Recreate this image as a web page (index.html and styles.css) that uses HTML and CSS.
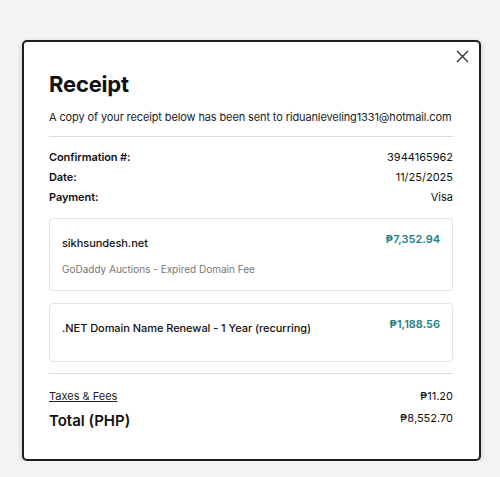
FILE: index.html
```html
<!DOCTYPE html>
<html lang="en">
<head>
<meta charset="utf-8">
<title>Receipt</title>
<link rel="stylesheet" href="styles.css">
</head>
<body>
<div class="modal">
  <button class="close" aria-label="Close">
    <svg width="13" height="13" viewBox="0 0 13 13"><path d="M1 1L12 12M12 1L1 12" stroke="#333" stroke-width="1.4" fill="none"/></svg>
  </button>
  <h1 class="title">Receipt</h1>
  <p class="desc">A copy of your receipt below has been sent to riduanleveling1331@hotmail.com</p>
  <hr class="rule">
  <div class="meta">
    <div class="row"><span class="label">Confirmation #:</span><span>3944165962</span></div>
    <div class="row"><span class="label">Date:</span><span>11/25/2025</span></div>
    <div class="row"><span class="label">Payment:</span><span>Visa</span></div>
  </div>
  <div class="card card-one">
    <div class="card-main">
      <div class="item-name">sikhsundesh.net</div>
      <div class="item-sub">GoDaddy Auctions - Expired Domain Fee</div>
    </div>
    <div class="price">₱7,352.94</div>
  </div>
  <div class="card card-two">
    <div class="card-main">
      <div class="item-name">.NET Domain Name Renewal - 1 Year (recurring)</div>
    </div>
    <div class="price">₱1,188.56</div>
  </div>
  <hr class="rule rule-bottom">
  <div class="row taxes"><span class="link">Taxes &amp; Fees</span><span>₱11.20</span></div>
  <div class="row total"><span class="total-label">Total (PHP)</span><span class="total-value">₱8,552.70</span></div>
</div>
</body>
</html>
```
FILE: styles.css
```css
* { box-sizing: border-box; }
body {
  margin: 0;
  background: #f4f4f4;
  padding: 40px 0 0 22px;
  font-family: Inter, "Noto Sans", sans-serif;
  color: #111;
}
.modal {
  position: relative;
  width: 459px;
  height: 421px;
  background: #fff;
  border: 2px solid #1e1e1e;
  border-radius: 5px;
  box-shadow: 0 2px 6px rgba(0,0,0,0.18);
  padding: 28px 26px 0 25px;
}
.close {
  position: absolute;
  top: 8px;
  right: 10px;
  background: none;
  border: 0;
  padding: 0;
  width: 13px;
  height: 13px;
  display: flex;
}
.title {
  margin: 0;
  font-size: 22px;
  line-height: 28px;
  font-weight: 700;
  letter-spacing: -0.2px;
}
.desc {
  margin: 11px 0 0;
  font-size: 11px;
  line-height: 16px;
  letter-spacing: -0.12px;
  white-space: nowrap;
  color: #222;
}
.rule {
  margin: 11px 0 0;
  border: 0;
  border-top: 1px solid #dcdcdc;
  height: 0;
}
.meta { margin-top: 10px; }
.row {
  display: flex;
  justify-content: space-between;
  align-items: center;
  font-size: 11px;
  line-height: 20px;
}
.label { font-weight: 600; letter-spacing: -0.1px; }
.card {
  display: flex;
  justify-content: space-between;
  align-items: flex-start;
  margin-top: 11px;
  border: 1px solid #e3e3e3;
  border-radius: 4px;
  padding: 12px 12px 0 12px;
}
.card-one { height: 73px; }
.card-two { height: 59px; margin-top: 12px; }
.item-name {
  margin-top: 4px;
  font-size: 11px;
  line-height: 16px;
  font-weight: 500;
  letter-spacing: -0.05px;
}
.item-sub {
  margin-top: 10px;
  font-size: 10px;
  line-height: 16px;
  color: #777;
}
.price {
  font-size: 11px;
  line-height: 16px;
  font-weight: 600;
  color: #1f7f86;
}
.rule-bottom { margin-top: 11px; }
.taxes { margin-top: 12px; }
.link { text-decoration: underline; color: #222; }
.total { align-items: flex-start; margin-top: 2px; }
.total-label {
  font-size: 15px;
  line-height: 26px;
  font-weight: 600;
}
.total-value { line-height: 20px; }
```
